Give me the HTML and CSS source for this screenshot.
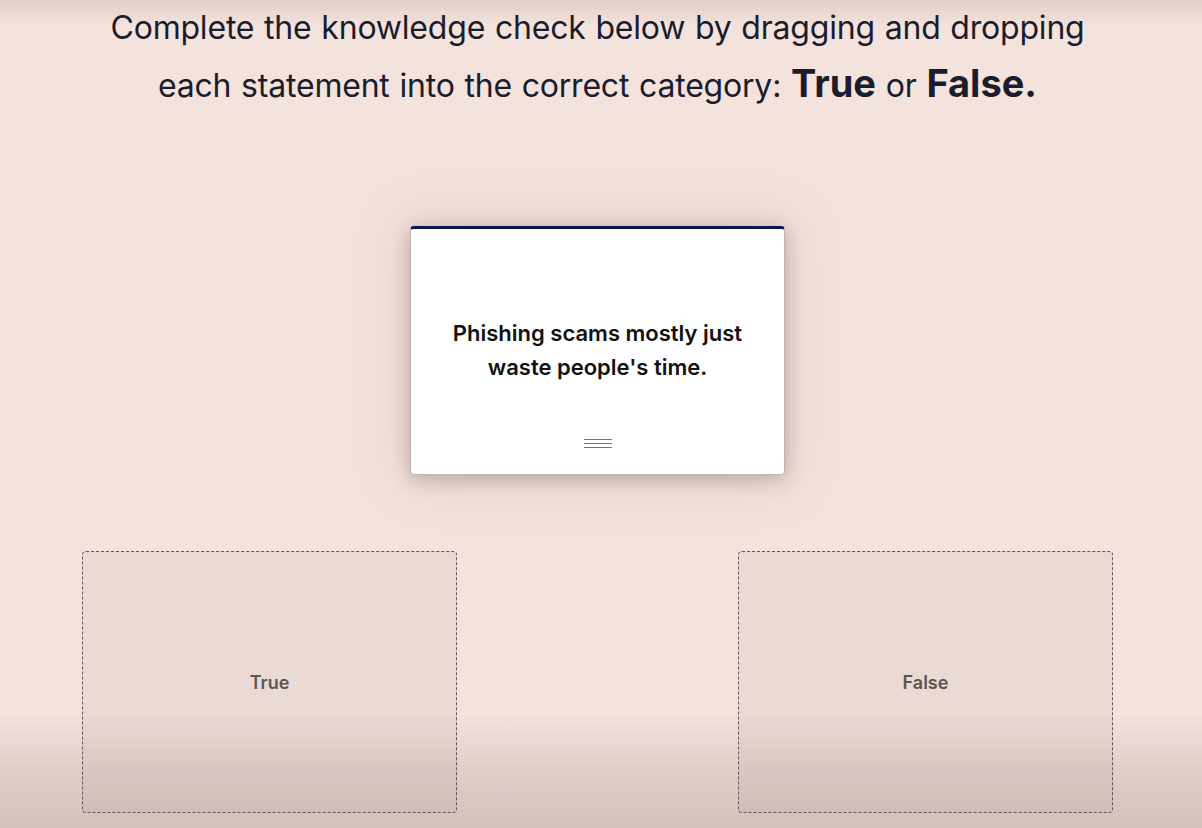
FILE: index.html
```html
<!DOCTYPE html>
<html lang="en">
<head>
<meta charset="utf-8">
<title>Knowledge check</title>
<link rel="stylesheet" href="styles.css">
</head>
<body>
<main class="page">
  <h1 class="intro">Complete the knowledge check below by dragging and dropping<br>each statement into the correct category: <strong>True</strong> or <strong>False.</strong></h1>
  <section class="deck">
    <div class="card">
      <p class="card-text">Phishing scams mostly just<br>waste people's time.</p>
      <span class="handle"><i></i><i></i><i></i></span>
    </div>
  </section>
  <section class="zones">
    <div class="zone">True</div>
    <div class="zone">False</div>
  </section>
</main>
<div class="shade"></div>
</body>
</html>
```
FILE: styles.css
```css
html, body {
  margin: 0;
  padding: 0;
  height: 100%;
  overflow: hidden;
}
body {
  background: #f4e3dd;
  font-family: Inter, "Open Sans", sans-serif;
  color: #1b1c2c;
}
.page {
  width: 1195px;
  display: flex;
  flex-direction: column;
  align-items: center;
}
.intro {
  margin: -1px 0 0;
  font-weight: 400;
  font-size: 32px;
  line-height: 58px;
  text-align: center;
  letter-spacing: -0.2px;
  word-spacing: 1px;
}
.intro strong {
  font-weight: 700;
  font-size: 38px;
  line-height: 1;
  letter-spacing: 0;
}
.deck {
  margin-top: 111px;
  display: flex;
  justify-content: center;
}
.card {
  width: 375px;
  height: 249px;
  box-sizing: border-box;
  background: #fff;
  border: 1px solid #bdb6b4;
  border-top: 3px solid #0b1452;
  border-radius: 4px;
  box-shadow: 0 4px 18px rgba(60, 40, 35, 0.26), 0 0 55px 10px rgba(120, 80, 70, 0.13);
  display: flex;
  flex-direction: column;
  align-items: center;
}
.card-text {
  margin: 87px 0 0;
  font-weight: 600;
  font-size: 22px;
  line-height: 34px;
  text-align: center;
  color: #111;
}
.handle {
  margin-top: 55px;
  display: flex;
  flex-direction: column;
  gap: 3px;
}
.handle i {
  display: block;
  width: 28px;
  height: 1px;
  background: #777;
}
.zones {
  margin-top: 76px;
  width: 1031px;
  display: flex;
  justify-content: space-between;
}
.zone {
  width: 375px;
  height: 262px;
  box-sizing: border-box;
  border: 1px dashed #5e5a5a;
  border-radius: 4px;
  background: #ebdad4;
  display: flex;
  align-items: center;
  justify-content: center;
  font-weight: 600;
  font-size: 18px;
  color: #5a5656;
}
.shade {
  position: fixed;
  inset: 0;
  pointer-events: none;
  background:
    linear-gradient(to bottom, rgba(120, 90, 80, 0.14) 0, rgba(120, 90, 80, 0) 26px),
    linear-gradient(to top, rgba(90, 70, 65, 0.22) 0, rgba(90, 70, 65, 0.12) 60px, rgba(90, 70, 65, 0) 115px);
}
```
